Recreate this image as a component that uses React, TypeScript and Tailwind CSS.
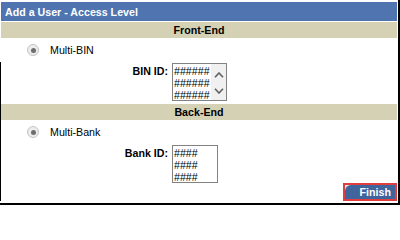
import React from "react";

const font = { fontFamily: '"Liberation Sans", Arial, sans-serif' };

function Radio() {
  return (
    <div className="w-[12px] h-[12px] rounded-full border border-[#c4c4c4] bg-[#ececec] flex items-center justify-center shrink-0">
      <div className="w-[5px] h-[5px] rounded-full bg-[#6e6e6e]" />
    </div>
  );
}

function Chevron({ up }: { up?: boolean }) {
  return (
    <svg width="10" height="6" viewBox="0 0 10 6" className="block">
      <path
        d={up ? "M1 5.2 L5 1 L9 5.2" : "M1 0.8 L5 5 L9 0.8"}
        fill="none"
        stroke="#606060"
        strokeWidth="1.6"
      />
    </svg>
  );
}

export default function App() {
  return (
    <div
      className="w-[400px] border-r-2 border-b-2 border-black pt-[2px] pl-[1px] pr-[1px] pb-[2px] bg-white flex flex-col text-[10.67px] text-black"
      style={font}
    >
      <div className="h-[19px] bg-[#4f74af] text-white font-bold flex items-center pl-[4px] leading-[12px]">
        Add a User - Access Level
      </div>
      <div className="mt-[1px] h-[16px] bg-[#d5d1b5] font-bold flex items-center justify-center leading-[12px]">
        Front-End
      </div>
      <div className="h-[24px] flex items-center pl-[26px] gap-[11px] leading-[12px]">
        <Radio />
        <span>Multi-BIN</span>
      </div>
      <div className="-ml-[1px] border-l border-black flex flex-col">
        <div className="pt-[1px] pb-[3px] flex items-start gap-[4px] leading-[12px]">
          <div className="w-[167px] text-right font-bold mt-[2px]">BIN ID:</div>
          <div className="h-[38px] border border-[#828282] flex bg-white">
            <div className="w-[38px] pl-[1px] pt-[1px] flex flex-col">
              <span>######</span>
              <span>######</span>
              <span>######</span>
            </div>
            <div className="w-[15px] bg-[#f0f0f0] flex flex-col items-center justify-between pt-[8px] pb-[6px]">
              <Chevron up />
              <Chevron />
            </div>
          </div>
        </div>
        <div className="h-[16px] bg-[#d5d1b5] font-bold flex items-center justify-center leading-[12px]">
          Back-End
        </div>
        <div className="h-[24px] flex items-center pl-[26px] gap-[11px] leading-[12px]">
          <Radio />
          <span>Multi-Bank</span>
        </div>
        <div className="pt-[1px] flex items-start gap-[4px] leading-[12px]">
          <div className="w-[167px] text-right font-bold mt-[2px]">Bank ID:</div>
          <div className="w-[46px] h-[38px] border border-[#828282] pl-[1px] pt-[1px] flex flex-col bg-white">
            <span>####</span>
            <span>####</span>
            <span>####</span>
          </div>
        </div>
        <div className="flex justify-end">
          <div className="h-[18px] border-2 border-[#e03e3e] bg-[#e8e8e8]">
            <div className="h-full bg-[#40649c] rounded-tl-[6px] text-white font-bold flex items-center pl-[15px] pr-[4px] leading-[12px]">
              Finish
            </div>
          </div>
        </div>
      </div>
    </div>
  );
}
